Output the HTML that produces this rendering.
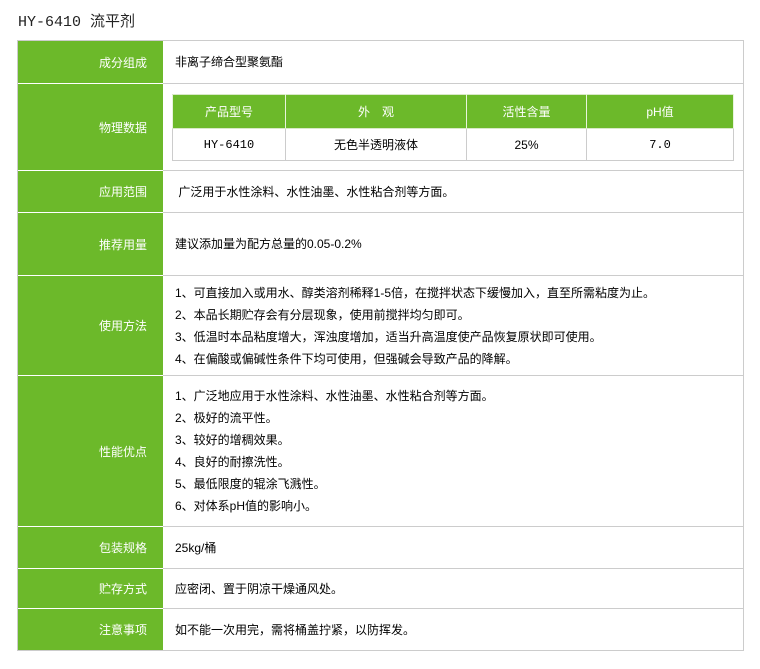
<!DOCTYPE html>
<html><head><meta charset="utf-8"><style>
body{margin:0;background:#fff;font-family:"Liberation Sans","Noto Sans CJK SC",sans-serif;font-size:12px;color:#000;}
.title{position:absolute;left:18px;top:10px;font-family:"Liberation Mono","Noto Sans CJK SC",monospace;font-size:15px;color:#222;}
.t{position:absolute;left:17px;top:40px;width:725px;border:1px solid #ccc;border-top:1px solid #ccc;}
.r{position:relative;border-top:1px solid #ccc;}
.r:first-child{border-top:none;}
.l{position:absolute;left:0;top:-1px;bottom:0;width:145px;background:#6cb92a;border-top:1px solid #fff;color:#fff;text-align:right;box-sizing:border-box;padding-right:16px;display:flex;align-items:center;justify-content:flex-end;}
.r:first-child .l{top:0;border-top:none}
.c{position:absolute;left:157px;top:0;bottom:0;display:flex;flex-direction:column;justify-content:center;line-height:22px;}
.in{position:absolute;left:154px;top:10px;width:562px;border-collapse:collapse;}
.in td{border:1px solid #ccc;text-align:center;height:31px;padding:0;}
.in tr.h td{background:#6cb92a;color:#fff;height:33px;border-color:#d8e8c8 #e8f4dc;}
</style></head><body>
<div class="title">HY-6410 流平剂</div>
<div class="t">
<div class="r" style="height:42px"><div class="l">成分组成</div><div class="c">非离子缔合型聚氨酯</div></div>
<div class="r" style="height:86px"><div class="l">物理数据</div>
<table class="in"><tr class="h"><td style="width:112px">产品型号</td><td style="width:180px">外　观</td><td style="width:119px">活性含量</td><td>pH值</td></tr>
<tr><td style="font-family:'Liberation Mono',monospace">HY-6410</td><td>无色半透明液体</td><td>25%</td><td style="font-family:'Liberation Mono',monospace">7.0</td></tr></table></div>
<div class="r" style="height:41px"><div class="l">应用范围</div><div class="c">&nbsp;广泛用于水性涂料、水性油墨、水性粘合剂等方面。</div></div>
<div class="r" style="height:62px"><div class="l">推荐用量</div><div class="c">建议添加量为配方总量的0.05-0.2%</div></div>
<div class="r" style="height:99px"><div class="l">使用方法</div><div class="c"><div>1、可直接加入或用水、醇类溶剂稀释1-5倍，在搅拌状态下缓慢加入，直至所需粘度为止。</div><div>2、本品长期贮存会有分层现象，使用前搅拌均匀即可。</div><div>3、低温时本品粘度增大，浑浊度增加，适当升高温度使产品恢复原状即可使用。</div><div>4、在偏酸或偏碱性条件下均可使用，但强碱会导致产品的降解。</div></div></div>
<div class="r" style="height:150px"><div class="l">性能优点</div><div class="c"><div>1、广泛地应用于水性涂料、水性油墨、水性粘合剂等方面。</div><div>2、极好的流平性。</div><div>3、较好的增稠效果。</div><div>4、良好的耐擦洗性。</div><div>5、最低限度的辊涂飞溅性。</div><div>6、对体系pH值的影响小。</div></div></div>
<div class="r" style="height:41px"><div class="l">包装规格</div><div class="c">25kg/桶</div></div>
<div class="r" style="height:39px"><div class="l">贮存方式</div><div class="c">应密闭、置于阴凉干燥通风处。</div></div>
<div class="r" style="height:41px"><div class="l">注意事项</div><div class="c">如不能一次用完，需将桶盖拧紧，以防挥发。</div></div>
</div>
</body></html>
